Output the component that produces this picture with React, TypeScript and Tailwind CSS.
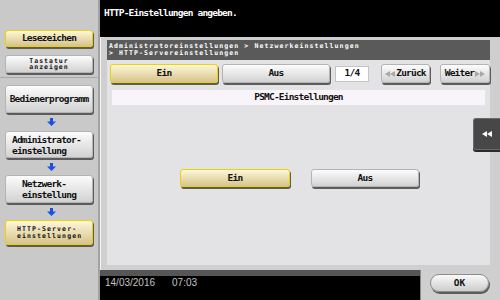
import type { ReactNode } from "react"
import clsx from "clsx"

const mono = "font-['DejaVu_Sans_Mono',monospace]"

function Btn({ yellow, className, children }: { yellow?: boolean; className?: string; children: ReactNode }) {
  return (
    <div
      className={clsx(
        "flex items-center justify-center rounded-[3px] border text-[#111] shadow-[1px_2px_0_#5c5c5c]",
        yellow
          ? "border-[#ecd200] bg-linear-to-b from-[#fdf7d9] to-[#d6c48a]"
          : "border-[#b4b4b4] bg-linear-to-b from-[#fcfcfc] to-[#d2d2d2]",
        className,
      )}
    >
      {children}
    </div>
  )
}

function DownArrow() {
  return (
    <svg width="9" height="8" viewBox="0 0 9 8">
      <rect x="3" y="0" width="3" height="4" fill="#1b4fe4" />
      <polygon points="0,3.5 9,3.5 4.5,8" fill="#1b4fe4" />
    </svg>
  )
}

function Dbl({ dir, color, size = 6 }: { dir: "l" | "r"; color: string; size?: number }) {
  const w = size * 2
  return (
    <svg width={w} height={size + 1} viewBox="0 0 12 7">
      {dir === "l" ? (
        <>
          <polygon points="6,0 6,7 0,3.5" fill={color} />
          <polygon points="12,0 12,7 6,3.5" fill={color} />
        </>
      ) : (
        <>
          <polygon points="0,0 0,7 6,3.5" fill={color} />
          <polygon points="6,0 6,7 12,3.5" fill={color} />
        </>
      )}
    </svg>
  )
}

function ArrowRow() {
  return (
    <div className="flex w-[88px] flex-1 items-center justify-center">
      <DownArrow />
    </div>
  )
}

export default function App() {
  return (
    <div className={clsx("flex h-[300px] w-[500px] overflow-hidden", mono)}>
      {/* sidebar */}
      <div className="flex w-[100px] flex-col border-r-2 border-[#a2a2a2] bg-[#c9c9c9]">
        <div className="flex h-[78px] flex-col gap-[8px] border-b border-[#a8a8a8] pl-[5px] pt-[30px]">
          <Btn yellow className="h-[17px] w-[88px] text-[9.5px] font-bold tracking-[-0.8px]">Lesezeichen</Btn>
          <Btn className="h-[18px] w-[88px] flex-col text-[6.5px] font-bold leading-[6.5px] tracking-[1px]">
            <span>Tastatur</span>
            <span>anzeigen</span>
          </Btn>
        </div>
        <div className="flex flex-col pl-[5px] pt-[7px] text-[9.5px] font-bold tracking-[-0.8px]">
          <Btn className="h-[28px] w-[88px]">Bedienerprogramm</Btn>
          <div className="flex h-[18px]"><ArrowRow /></div>
          <Btn className="h-[27px] w-[88px] !justify-start pl-[6px] leading-[11px]">
            <span>Administrator-<br />einstellung</span>
          </Btn>
          <div className="flex h-[17px]"><ArrowRow /></div>
          <Btn className="h-[28px] w-[88px] leading-[11px]">
            <span className="text-left">Netzwerk-<br />einstellung</span>
          </Btn>
          <div className="flex h-[17px]"><ArrowRow /></div>
          <Btn yellow className="h-[25px] w-[88px] !justify-start pl-[11px] text-[6.5px] leading-[7px] tracking-[1.1px]">
            <span>HTTP-Server-<br />einstellungen</span>
          </Btn>
        </div>
      </div>

      {/* main */}
      <div className="flex w-[400px] flex-col bg-black">
        <div className="h-[37px] pl-[4px] pt-[6px] text-[9.5px] font-bold tracking-[-0.8px] text-white">HTTP-Einstellungen angeben.</div>

        <div className="relative h-[233px] border-l border-[#f4f4f4] bg-[#cfcfcf] pb-[5px] pl-[6px] pr-[10px] pt-[3px]">
          <div className="h-[20px] bg-[#5a5a5a] px-[2px] pt-[3px] text-[6.5px] font-bold leading-[6.5px] tracking-[1.1px] text-white">
            <div>Administratoreinstellungen &gt; Netzwerkeinstellungen</div>
            <div>&gt; HTTP-Servereinstellungen</div>
          </div>
          <div className="flex h-[205px] flex-col bg-[#e3e3e6] text-[9.5px] font-bold tracking-[-0.8px]">
            <div className="flex items-center pl-[3px] pt-[4px]">
              <Btn yellow className="h-[19px] w-[108px]">Ein</Btn>
              <Btn className="ml-[4px] h-[19px] w-[108px]">Aus</Btn>
              <div className="ml-[5px] flex h-[16px] w-[34px] items-center justify-center border border-[#c4c4c4] bg-white text-[#111]">1/4</div>
              <Btn className="ml-[12px] h-[19px] w-[49px] gap-[1px]">
                <Dbl dir="l" color="#a8a8a8" size={5} />
                <span>Zurück</span>
              </Btn>
              <Btn className="ml-[10px] h-[19px] w-[50px] gap-[1px]">
                <span>Weiter</span>
                <Dbl dir="r" color="#a8a8a8" size={5} />
              </Btn>
            </div>
            <div className="ml-[5px] mt-[7px] flex h-[15px] w-[373px] items-center justify-center bg-[#f9f4f9] text-[#111]">PSMC-Einstellungen</div>
            <div className="mt-[64px] flex justify-center gap-[21px] pl-[2px]">
              <Btn yellow className="h-[18px] w-[110px]">Ein</Btn>
              <Btn className="h-[18px] w-[108px]">Aus</Btn>
            </div>
          </div>

          <div className="absolute right-0 top-[81px] flex h-[32px] w-[27px] items-center justify-center rounded-l-[3px] border border-r-0 border-[#6a6a6a] bg-[#474747] shadow-[0_2px_0_#2a2a2a]">
            <Dbl dir="l" color="#ffffff" size={5} />
          </div>
        </div>

        <div className="flex h-[30px]">
          <div className="flex w-[320px] gap-[17px] border-t-[6px] border-[#565656] pl-[5px] pt-0 font-['Liberation_Sans',sans-serif] text-[10px] leading-[14px] text-[#c4c4c4]">
            <span>14/03/2016</span>
            <span>07:03</span>
          </div>
          <div className="w-[80px] border-l border-[#8a8a8a] bg-[#cfcfcf] pl-[9px] pt-[4px]">
            <div className="flex h-[18px] w-[59px] items-center justify-center rounded-full border border-[#8c8c8c] bg-linear-to-b from-[#fafafa] to-[#cdcdcd] text-[9.5px] font-bold text-[#111] shadow-[1px_2px_0_#5c5c5c]">OK</div>
          </div>
        </div>
      </div>
    </div>
  )
}
